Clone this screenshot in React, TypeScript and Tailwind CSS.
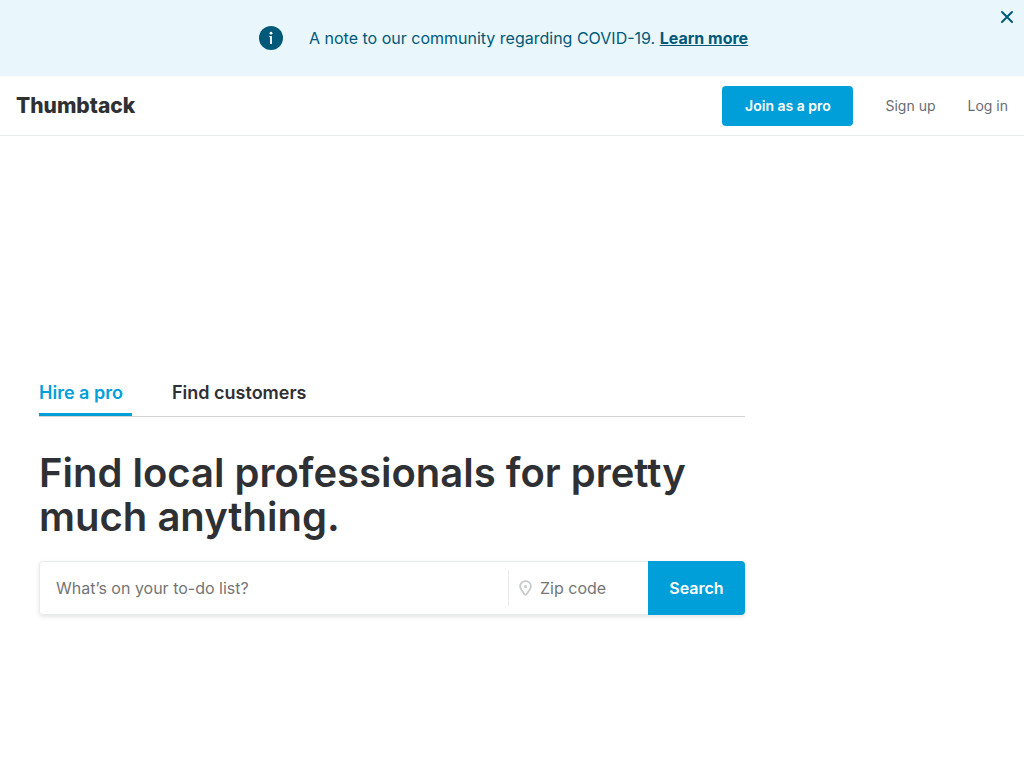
import React from "react";

function Banner() {
  return (
    <section className="relative flex min-h-[76px] items-center justify-center bg-[#e9f6fb] px-10 text-[#005979]">
      <svg className="mr-[26px] h-6 w-6 shrink-0" viewBox="0 0 24 24" aria-hidden="true">
        <circle cx="12" cy="12" r="12" fill="#005979" />
        <circle cx="12" cy="7.2" r="1.4" fill="#fff" />
        <path d="M10.4 10H12.900V18H11.100V11.300H10.400z" fill="#fff" />
      </svg>
      <p className="text-base md:min-w-[456px]">
        A note to our community regarding COVID-19.{" "}
        <a href="#covid" className="font-bold underline">
          Learn more
        </a>
      </p>
      <button type="button" aria-label="Close" className="absolute right-[10px] top-[10px] p-0">
        <svg className="h-[14px] w-[14px]" viewBox="0 0 14 14" fill="none" stroke="#005979" strokeWidth="2" strokeLinecap="round">
          <path d="M2 2l10 10M12 2L2 12" />
        </svg>
      </button>
    </section>
  );
}

function Header() {
  return (
    <header className="flex h-[60px] items-center justify-between border-b border-[#e9eced] px-4">
      <a href="#home" className="text-[21px] leading-6 font-extrabold text-[#2f3033]">
        Thumbtack
      </a>
      <nav className="flex items-center gap-8 text-sm text-[#676d73]">
        <a href="#pro" className="flex h-10 w-[131px] items-center justify-center rounded bg-[#009fd9] font-semibold text-white">
          Join as a pro
        </a>
        <a href="#signup">Sign up</a>
        <a href="#login">Log in</a>
      </nav>
    </header>
  );
}

function SearchForm() {
  return (
    <form className="mt-[22px] flex h-[54px] rounded shadow-[0_2px_4px_rgba(0,0,0,0.1)]" onSubmit={(e) => e.preventDefault()}>
      <div className="flex min-w-0 flex-1 items-center rounded-l border border-r-0 border-[#e9eced] bg-white">
        <input
          type="text"
          aria-label="What’s on your to-do list?"
          placeholder="What’s on your to-do list?"
          className="h-full min-w-0 flex-1 bg-transparent px-4 text-base outline-none placeholder:text-[#757575]"
        />
        <label className="flex h-9 w-[140px] items-center gap-2 border-l border-[#e9eced] pl-[10px]">
          <svg className="h-4 w-[13px] shrink-0" viewBox="0 0 13 16" fill="none" aria-hidden="true">
            <path d="M6.500 1.100C3.400 1.100 1.100 3.400 1.100 6.300c0 1.500.6 2.600 1.400 3.800l3.200 4.400c.4.500 1.200.5 1.600 0l3.200-4.400c.8-1.200 1.400-2.300 1.400-3.800 0-2.900-2.300-5.200-5.400-5.200z" stroke="#c7cacd" strokeWidth="1.800" />
            <circle cx="6.500" cy="6.400" r="1.500" fill="#c7cacd" />
          </svg>
          <input
            type="text"
            aria-label="Zip code"
            placeholder="Zip code"
            className="w-full min-w-0 bg-transparent text-base outline-none placeholder:text-[#757575]"
          />
        </label>
      </div>
      <button type="submit" className="w-[97px] shrink-0 rounded-r bg-[#009fd9] text-base font-semibold text-white">
        Search
      </button>
    </form>
  );
}

export default function App() {
  return (
    <div className="min-h-screen bg-white font-['Inter','Noto_Sans',sans-serif] text-[#2f3033]">
      <Banner />
      <Header />
      <main className="px-[39px] pt-[236px]">
        <div className="max-w-[706px]">
          <div role="tablist" className="flex gap-10 border-b border-[#d3d4d5] text-lg font-semibold">
            <button type="button" role="tab" aria-selected="true" className="h-11 w-[93px] border-b-3 border-[#009fd9] pt-px text-left whitespace-nowrap text-[#009fd9]">
              Hire a pro
            </button>
            <button type="button" role="tab" aria-selected="false" className="h-11 border-b-3 border-transparent pt-px whitespace-nowrap">
              Find customers
            </button>
          </div>
          <h1 className="mt-[34px] text-[40px] leading-[44px] font-semibold">
            Find local professionals for pretty much anything.
          </h1>
          <SearchForm />
        </div>
      </main>
    </div>
  );
}
